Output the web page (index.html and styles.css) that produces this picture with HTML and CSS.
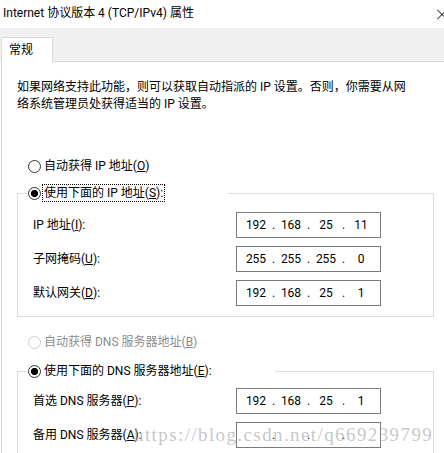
FILE: index.html
```html
<!DOCTYPE html>
<html lang="zh-CN">
<head>
<meta charset="utf-8">
<title>Internet 协议版本 4 (TCP/IPv4) 属性</title>
<link rel="stylesheet" href="styles.css">
</head>
<body>
<div class="window">
  <div class="titlebar">
    <span class="title">Internet 协议版本 4 (TCP/IPv4) 属性</span>
    <svg class="close" width="7" height="11" viewBox="0 0 7 11"><path d="M0 0.5L10 10.5M10 0.5L0 10.5" stroke="#000" stroke-width="1" fill="none"/></svg>
  </div>
  <div class="tabstrip">
    <div class="tab">常规</div>
    <div class="tabfill"></div>
  </div>
  <div class="panel">
    <p class="intro">如果网络支持此功能，则可以获取自动指派的 IP 设置。否则，你需要从网<br>络系统管理员处获得适当的 IP 设置。</p>

    <div class="radio outer"><span class="dot"></span><span class="rtext">自动获得 IP 地址(<u>O</u>)</span></div>

    <fieldset class="group g1">
      <legend class="legend l1"><div class="radio"><span class="dot on"></span><span class="rtext focus">使用下面的 IP 地址(<u>S</u>):</span></div></legend>
      <div class="grid">
        <span class="lbl">IP 地址(<u>I</u>):</span>
        <div class="ip"><span class="oct">192</span><span class="sep">.</span><span class="oct">168</span><span class="sep">.</span><span class="oct">25</span><span class="sep">.</span><span class="oct">11</span></div>
        <span class="lbl">子网掩码(<u>U</u>):</span>
        <div class="ip"><span class="oct">255</span><span class="sep">.</span><span class="oct">255</span><span class="sep">.</span><span class="oct">255</span><span class="sep">.</span><span class="oct">0</span></div>
        <span class="lbl">默认网关(<u>D</u>):</span>
        <div class="ip"><span class="oct">192</span><span class="sep">.</span><span class="oct">168</span><span class="sep">.</span><span class="oct">25</span><span class="sep">.</span><span class="oct">1</span></div>
      </div>
    </fieldset>

    <div class="radio outer disabled dns-auto"><span class="dot"></span><span class="rtext">自动获得 DNS 服务器地址(<u>B</u>)</span></div>

    <fieldset class="group g2">
      <legend class="legend l2"><div class="radio"><span class="dot on"></span><span class="rtext">使用下面的 DNS 服务器地址(<u>E</u>):</span></div></legend>
      <div class="grid">
        <span class="lbl">首选 DNS 服务器(<u>P</u>):</span>
        <div class="ip"><span class="oct">192</span><span class="sep">.</span><span class="oct">168</span><span class="sep">.</span><span class="oct">25</span><span class="sep">.</span><span class="oct">1</span></div>
        <span class="lbl">备用 DNS 服务器(<u>A</u>):</span>
        <div class="ip"><span class="oct"></span><span class="sep">.</span><span class="oct"></span><span class="sep">.</span><span class="oct"></span><span class="sep">.</span><span class="oct"></span></div>
      </div>
    </fieldset>
  </div>
  <div class="watermark">https://blog.csdn.net/q669239799</div>
</div>
</body>
</html>
```

FILE: styles.css
```css
html, body {
  margin: 0;
  padding: 0;
  background: #fff;
}
body {
  width: 444px;
  height: 453px;
  overflow: hidden;
  font-family: Roboto, "Noto Sans CJK SC", sans-serif;
  font-size: 12px;
  color: #000;
}
.window {
  position: relative;
  width: 444px;
  height: 453px;
  overflow: hidden;
}
.titlebar {
  height: 28px;
  box-sizing: border-box;
  padding: 0 0 2px 3px;
  display: flex;
  align-items: center;
  justify-content: space-between;
  line-height: 16px;
}
.close {
  display: block;
  margin-top: 3px;
}
.tabstrip {
  height: 34px;
  background: #f0f0f0;
  display: flex;
  align-items: flex-end;
}
.tab {
  margin-left: 1px;
  width: 52px;
  height: 25px;
  box-sizing: border-box;
  border: 1px solid #d9d9d9;
  border-bottom: 0;
  background: #fff;
  padding: 4px 0 0 7px;
  line-height: 16px;
}
.tabfill {
  flex: 1;
  height: 0;
  border-bottom: 1px solid #d9d9d9;
}
.panel {
  margin-left: 1px;
  border-left: 1px solid #d9d9d9;
  padding: 17px 0 0 15px;
  height: 400px;
}
.intro {
  margin: 0;
  line-height: 17px;
  white-space: nowrap;
}
.radio {
  display: flex;
  align-items: center;
  height: 18px;
  line-height: 16px;
  white-space: nowrap;
}
.radio.outer {
  margin: 44px 0 0 11px;
}
.radio.dns-auto {
  margin-top: 16px;
}
.dot {
  width: 13px;
  height: 13px;
  box-sizing: border-box;
  border: 1px solid #333;
  border-radius: 50%;
  background: #fff;
  margin-right: 3px;
  flex: none;
}
.dot.on {
  background: radial-gradient(circle, #000 0 3.3px, #fff 3.9px);
}
.disabled .dot {
  border-color: #cccccc;
}
.disabled .rtext {
  color: #8c8c8c;
}
.focus {
  display: inline-block;
  height: 16px;
  padding: 0 1px;
  margin-left: -1px;
  outline: 1px dotted #000;
}
.group {
  width: 417px;
  box-sizing: border-box;
  margin: 9px 0 0 0;
  border: 1px solid #dcdcdc;
  padding: 10px 0 10px 10px;
  min-width: 0;
}
.g2 {
  margin-top: 11px;
  padding-top: 8px;
}
.legend {
  padding: 0;
  height: 18px;
}
.l1 {
  width: 200px;
}
.l2 {
  width: 247px;
}
.grid {
  margin-left: 5px;
  display: grid;
  grid-template-columns: 203px 145px;
  grid-auto-rows: 26px;
  row-gap: 8px;
  align-items: center;
}
.lbl {
  line-height: 16px;
  white-space: nowrap;
}
.ip {
  height: 26px;
  box-sizing: border-box;
  border: 1px solid #7a7a7a;
  padding-left: 5px;
  display: flex;
  align-items: center;
  line-height: 16px;
  background: #fff;
}
.oct {
  width: 28px;
  text-align: center;
}
.sep {
  width: 7px;
  text-align: center;
}
.watermark {
  position: absolute;
  left: 134px;
  top: 425px;
  font-family: "Liberation Serif", serif;
  font-size: 19px;
  line-height: 20px;
  letter-spacing: 1.4px;
  color: rgba(150, 150, 150, 0.55);
  white-space: nowrap;
  pointer-events: none;
}
```
